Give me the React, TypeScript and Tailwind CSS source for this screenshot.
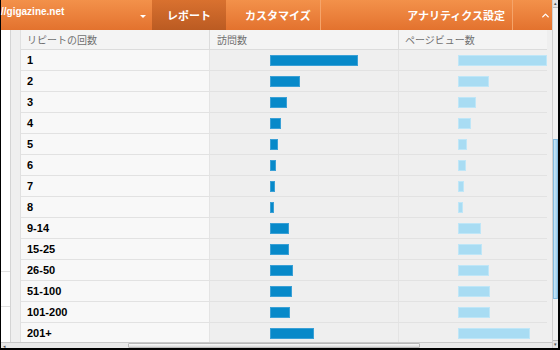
import { ChevronUp } from 'lucide-react'

const rows = [
  { label: '1', visits: 88, views: 89 },
  { label: '2', visits: 30, views: 31 },
  { label: '3', visits: 17, views: 18 },
  { label: '4', visits: 11, views: 13 },
  { label: '5', visits: 8, views: 9 },
  { label: '6', visits: 6, views: 8 },
  { label: '7', visits: 5, views: 6 },
  { label: '8', visits: 4, views: 5 },
  { label: '9-14', visits: 19, views: 23 },
  { label: '15-25', visits: 19, views: 24 },
  { label: '26-50', visits: 23, views: 31 },
  { label: '51-100', visits: 22, views: 32 },
  { label: '101-200', visits: 20, views: 32 },
  { label: '201+', visits: 44, views: 72 },
]

const jp = { fontFamily: '"Noto Sans CJK JP", "Liberation Sans", sans-serif' }
const sans = { fontFamily: '"Liberation Sans", Arial, sans-serif' }

export default function App() {
  return (
    <div className="w-[560px] h-[350px] bg-black pl-[1px] pr-[2px] pb-[2px] flex overflow-hidden">
      <div className="flex-1 flex flex-col min-w-0">
        {/* orange nav */}
        <div className="h-[30px] flex bg-gradient-to-b from-[#f3914a] to-[#e3722e] text-white shrink-0" style={jp}>
          <div className="w-[151px] relative">
            <span className="absolute left-0 top-[4px] text-[10px] font-bold" style={sans}>//gigazine.net</span>
            <span className="absolute left-[139px] top-[15px] w-0 h-0 border-l-[3px] border-r-[3px] border-t-[3px] border-l-transparent border-r-transparent border-t-white" />
          </div>
          <div className="w-[74px] flex items-center justify-center bg-gradient-to-b from-[#d9712f] to-[#bb5b22] text-[11px] font-bold">
            レポート
          </div>
          <div className="w-[95px] flex items-center pl-[19px] text-[11px] font-bold border-r border-[#f5a46a]">
            カスタマイズ
          </div>
          <div className="w-[192px] flex items-center justify-end pr-[7px] text-[11px] font-bold border-r border-[#f5a46a]">
            アナリティクス設定
          </div>
          <div className="flex-1 flex items-center justify-end pr-[1px]">
            <ChevronUp className="w-[11px] h-[11px]" strokeWidth={3} />
          </div>
        </div>

        {/* body */}
        <div className="flex-1 flex min-h-0 bg-[#efefef] overflow-hidden">
          <div className="w-[10px] bg-white border-r border-[#d4d4d4] flex flex-col">
            <div className="h-[258px]" />
            <div className="h-[38px] border-t border-[#e0e0e0]" />
            <div className="h-[38px] border-t border-[#e0e0e0]" />
          </div>
          <div className="w-[9px]" />
          <div className="w-[527px] border-l border-[#e0e0e0] flex flex-col">
            <div className="h-[20px] shrink-0 grid grid-cols-[188px_189px_150px] text-[10px] text-[#707070] border-b border-[#dcdcdc] bg-[#f4f4f4]" style={jp}>
              <div className="pl-[6px] flex items-center">リピートの回数</div>
              <div className="pl-[7px] flex items-center border-l border-[#dcdcdc]">訪問数</div>
              <div className="pl-[6px] flex items-center border-l border-[#dcdcdc]">ページビュー数</div>
            </div>
            {rows.map(r => (
              <div key={r.label} className="h-[21px] shrink-0 grid grid-cols-[188px_189px_150px] border-b border-[#e2e2e2]">
                <div className="bg-[#f8f8f8] pl-[6px] flex items-center text-[11px] font-bold text-black" style={sans}>
                  {r.label}
                </div>
                <div className="bg-[#efefef] border-l border-[#e4e4e4] flex items-center pl-[60px]">
                  <div className="h-[11px] bg-[#0789c9] border border-[#3aa0d6]" style={{ width: r.visits }} />
                </div>
                <div className="bg-[#efefef] border-l border-[#e4e4e4] flex items-center pl-[59px]">
                  <div className="h-[11px] bg-[#a8dcf3] border border-[#bfe6f7]" style={{ width: r.views }} />
                </div>
              </div>
            ))}
          </div>
        </div>

        {/* horizontal scrollbar */}
        <div className="h-[6px] shrink-0 bg-[#e8e8e8] border-t border-[#c8c8c8] flex items-center relative">
          <div className="ml-[127px] w-[292px] h-[5px] bg-gradient-to-b from-[#fafafa] to-[#d8d8d8] border border-[#b8b8b8] rounded-[1px]" />
          <div className="absolute left-[2px] top-[1px] text-[5px] leading-none text-[#555]">◂</div>
        </div>
      </div>

      {/* vertical scrollbar */}
      <div className="w-[6px] bg-[#f0f0f0] border-l border-[#d0d0d0] flex flex-col">
        <div className="h-[8px] bg-[#e4e4e4] border-b border-[#bcbcbc] flex items-center justify-center text-[5px] leading-none text-[#555]">▴</div>
        <div className="h-[131px]" />
        <div className="h-[160px] bg-gradient-to-r from-[#c9e6f6] to-[#9fd0ee] border border-[#86bde0]" />
        <div className="flex-1" />
        <div className="h-[8px] bg-[#e4e4e4] border-t border-[#bcbcbc] flex items-center justify-center text-[5px] leading-none text-[#555]">▾</div>
      </div>
    </div>
  )
}
